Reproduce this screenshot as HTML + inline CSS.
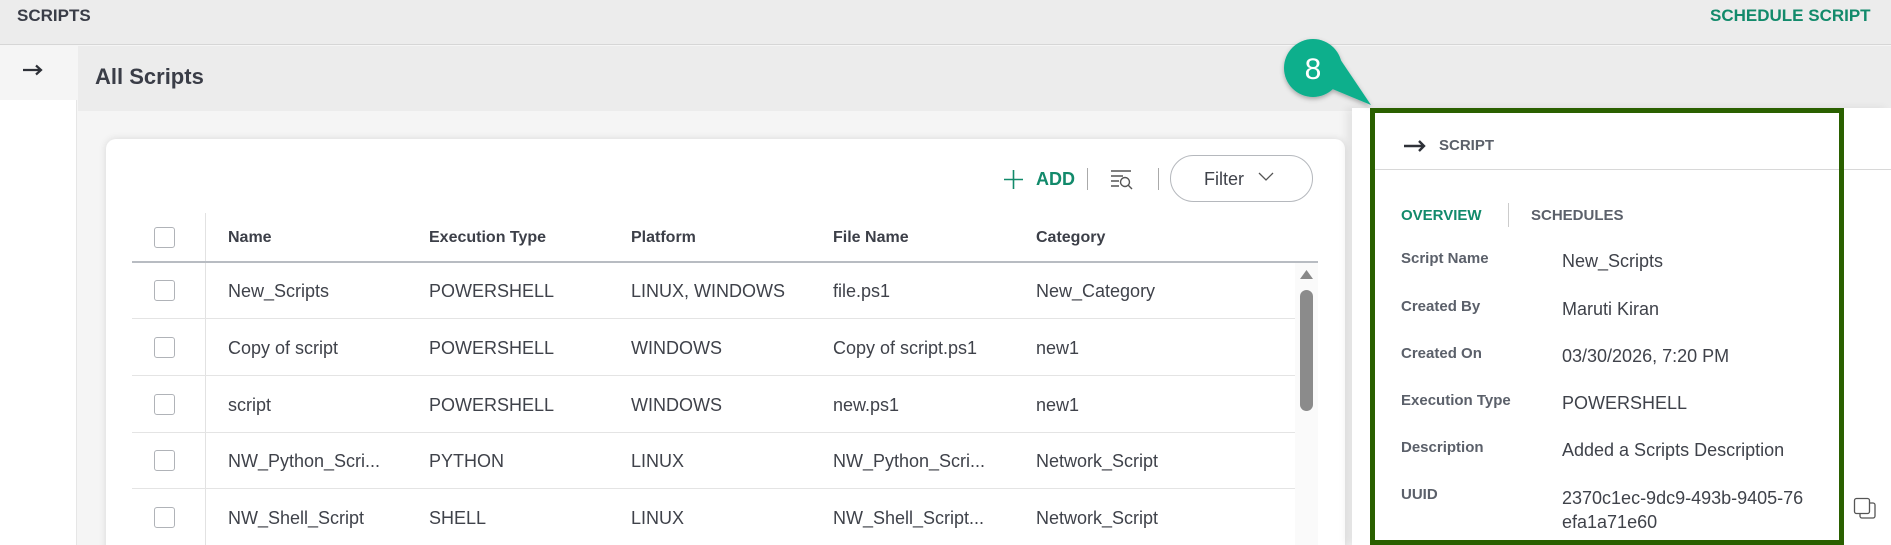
<!DOCTYPE html>
<html style="width:1891px;height:545px;overflow:hidden"><head><meta charset="utf-8"><style>
*{margin:0;padding:0;box-sizing:border-box}
body{width:1891px;height:545px;overflow:hidden;background:#f5f5f5;font-family:"Liberation Sans",sans-serif;color:#3c3f48;position:relative}
.abs{position:absolute}
.t{position:absolute;white-space:nowrap;line-height:1}
.b{font-weight:bold}
</style></head><body>
<div class="abs" style="left:0;top:0;width:1891px;height:45px;background:#ececec;border-bottom:1px solid #d6d6d6"></div>
<div class="t b" style="left:17px;top:7px;font-size:17px;color:#3a3d47">SCRIPTS</div>
<div class="t b" style="left:1710px;top:7px;font-size:17px;color:#128a6b">SCHEDULE SCRIPT</div>
<div class="abs" style="left:0;top:46px;width:77px;height:499px;background:#fff;border-right:1px solid #e6e6e6"></div>
<div class="abs" style="left:0;top:46px;width:77px;height:54px;background:#f5f5f5"></div>
<svg class="abs" style="left:22px;top:64px" width="22" height="12"><path d="M1 6h18M14 1.5l5 4.5-5 4.5" fill="none" stroke="#2e3138" stroke-width="2.2"/></svg>
<div class="abs" style="left:78px;top:46px;width:1813px;height:65px;background:#ececec"></div>
<div class="t b" style="left:95px;top:66px;font-size:22px;color:#3a3d47">All Scripts</div>
<div class="abs" style="left:106px;top:139px;width:1239px;height:420px;background:#fff;border-radius:10px;box-shadow:0 0 8px rgba(0,0,0,.12)"></div>
<svg class="abs" style="left:1003px;top:169px" width="21" height="21"><path d="M10.5 1v19M1 10.5h19" stroke="#128a6b" stroke-width="1.6"/></svg>
<div class="t b" style="left:1036px;top:170px;font-size:18px;color:#128a6b">ADD</div>
<div class="abs" style="left:1087px;top:168px;width:1px;height:22px;background:#aaa"></div>
<svg class="abs" style="left:1110px;top:169px" width="24" height="22"><path d="M1 2h20M1 7h12M1 12h8M1 17h8" stroke="#555" stroke-width="1.4"/><circle cx="15" cy="13" r="4.5" fill="none" stroke="#555" stroke-width="1.4"/><path d="M18 16l4 4" stroke="#555" stroke-width="1.4"/></svg>
<div class="abs" style="left:1158px;top:168px;width:1px;height:22px;background:#aaa"></div>
<div class="abs" style="left:1170px;top:155px;width:143px;height:47px;border:1px solid #b5b8bd;border-radius:24px"></div>
<div class="t" style="left:1204px;top:170px;font-size:18px;color:#3f424a">Filter</div>
<svg class="abs" style="left:1258px;top:172px" width="16" height="10"><path d="M1 1l7 7 7-7" fill="none" stroke="#555" stroke-width="1.3"/></svg>
<div class="abs" style="left:154px;top:227px;width:21px;height:21px;border:1px solid #b0b3b8;border-radius:3px"></div>
<div class="abs" style="left:205px;top:213px;width:1px;height:332px;background:#e2e2e2"></div>
<div class="t b" style="left:228px;top:230px;font-size:16px">Name</div>
<div class="t b" style="left:429px;top:230px;font-size:16px">Execution Type</div>
<div class="t b" style="left:631px;top:230px;font-size:16px">Platform</div>
<div class="t b" style="left:833px;top:230px;font-size:16px">File Name</div>
<div class="t b" style="left:1036px;top:230px;font-size:16px">Category</div>
<div class="abs" style="left:132px;top:261px;width:1186px;height:2px;background:#b8bcc2"></div>
<div class="abs" style="left:1295px;top:263px;width:23px;height:282px;background:#fafafa"></div>
<svg class="abs" style="left:1299px;top:269px" width="15" height="11"><path d="M7.5 1L14 10H1z" fill="#888"/></svg>
<div class="abs" style="left:1300px;top:290px;width:13px;height:121px;background:#8b8b8b;border-radius:7px"></div>
<div class="abs" style="left:132px;top:318px;width:1163px;height:1px;background:#e4e4e4"></div>
<div class="abs" style="left:132px;top:375px;width:1163px;height:1px;background:#e4e4e4"></div>
<div class="abs" style="left:132px;top:432px;width:1163px;height:1px;background:#e4e4e4"></div>
<div class="abs" style="left:132px;top:488px;width:1163px;height:1px;background:#e4e4e4"></div>
<div style="font-size:18px;color:#3f424a">
<div class="abs" style="left:154px;top:280px;width:21px;height:21px;border:1px solid #b0b3b8;border-radius:3px"></div>
<div class="t" style="left:228px;top:282px">New_Scripts</div><div class="t" style="left:429px;top:282px">POWERSHELL</div><div class="t" style="left:631px;top:282px">LINUX, WINDOWS</div><div class="t" style="left:833px;top:282px">file.ps1</div><div class="t" style="left:1036px;top:282px">New_Category</div>
<div class="abs" style="left:154px;top:337px;width:21px;height:21px;border:1px solid #b0b3b8;border-radius:3px"></div>
<div class="t" style="left:228px;top:339px">Copy of script</div><div class="t" style="left:429px;top:339px">POWERSHELL</div><div class="t" style="left:631px;top:339px">WINDOWS</div><div class="t" style="left:833px;top:339px">Copy of script.ps1</div><div class="t" style="left:1036px;top:339px">new1</div>
<div class="abs" style="left:154px;top:394px;width:21px;height:21px;border:1px solid #b0b3b8;border-radius:3px"></div>
<div class="t" style="left:228px;top:396px">script</div><div class="t" style="left:429px;top:396px">POWERSHELL</div><div class="t" style="left:631px;top:396px">WINDOWS</div><div class="t" style="left:833px;top:396px">new.ps1</div><div class="t" style="left:1036px;top:396px">new1</div>
<div class="abs" style="left:154px;top:450px;width:21px;height:21px;border:1px solid #b0b3b8;border-radius:3px"></div>
<div class="t" style="left:228px;top:452px">NW_Python_Scri...</div><div class="t" style="left:429px;top:452px">PYTHON</div><div class="t" style="left:631px;top:452px">LINUX</div><div class="t" style="left:833px;top:452px">NW_Python_Scri...</div><div class="t" style="left:1036px;top:452px">Network_Script</div>
<div class="abs" style="left:154px;top:507px;width:21px;height:21px;border:1px solid #b0b3b8;border-radius:3px"></div>
<div class="t" style="left:228px;top:509px">NW_Shell_Script</div><div class="t" style="left:429px;top:509px">SHELL</div><div class="t" style="left:631px;top:509px">LINUX</div><div class="t" style="left:833px;top:509px">NW_Shell_Script...</div><div class="t" style="left:1036px;top:509px">Network_Script</div>
</div>
<div class="abs" style="left:1352px;top:108px;width:539px;height:437px;background:#fff;box-shadow:-6px 0 8px rgba(0,0,0,.07)"></div>
<div class="abs" style="left:1370px;top:169px;width:521px;height:1px;background:#d8d8d8"></div>
<div class="abs" style="left:1370px;top:108px;width:474px;height:437px;border:5px solid #2a6000"></div>
<svg class="abs" style="left:1403px;top:139px" width="24" height="14"><path d="M1 7h20M16 2l5 5-5 5" fill="none" stroke="#2e3138" stroke-width="2.4"/></svg>
<div class="t b" style="left:1439px;top:138px;font-size:15px;color:#5b606a">SCRIPT</div>
<div class="t b" style="left:1401px;top:208px;font-size:15px;color:#128a6b">OVERVIEW</div>
<div class="abs" style="left:1508px;top:203px;width:1px;height:24px;background:#ccc"></div>
<div class="t b" style="left:1531px;top:208px;font-size:15px;color:#5b606a">SCHEDULES</div>
<div style="font-size:15px;color:#5b606a">
<div class="t b" style="left:1401px;top:251px">Script Name</div>
<div class="t b" style="left:1401px;top:299px">Created By</div>
<div class="t b" style="left:1401px;top:346px">Created On</div>
<div class="t b" style="left:1401px;top:393px">Execution Type</div>
<div class="t b" style="left:1401px;top:440px">Description</div>
<div class="t b" style="left:1401px;top:487px">UUID</div>
</div>
<div style="font-size:18px;color:#3f424a">
<div class="t" style="left:1562px;top:252px">New_Scripts</div>
<div class="t" style="left:1562px;top:300px">Maruti Kiran</div>
<div class="t" style="left:1562px;top:347px">03/30/2026, 7:20 PM</div>
<div class="t" style="left:1562px;top:394px">POWERSHELL</div>
<div class="t" style="left:1562px;top:441px">Added a Scripts Description</div>
<div class="t" style="left:1562px;top:489px">2370c1ec-9dc9-493b-9405-76</div>
<div class="t" style="left:1562px;top:513px">efa1a71e60</div>
</div>
<svg class="abs" style="left:1853px;top:497px" width="24" height="23"><rect x="7" y="6" width="15" height="15" rx="2" fill="#fff" stroke="#555" stroke-width="1.3"/><rect x="1.5" y="1.5" width="15" height="15" rx="2" fill="#fff" stroke="#555" stroke-width="1.3"/></svg>
<svg class="abs" style="left:1270px;top:30px;overflow:visible" width="110" height="80">
<defs><filter id="s" x="-30%" y="-30%" width="160%" height="160%"><feDropShadow dx="0" dy="2" stdDeviation="2.5" flood-opacity=".3"/></filter></defs>
<g filter="url(#s)"><circle cx="43" cy="38" r="29" fill="#0aaf8c"/><path d="M60 58L68 26L101 75z" fill="#0aaf8c"/></g>
<text x="43" y="49" font-family="Liberation Sans,sans-serif" font-size="30" fill="#fff" text-anchor="middle">8</text>
</svg>
</body></html>
